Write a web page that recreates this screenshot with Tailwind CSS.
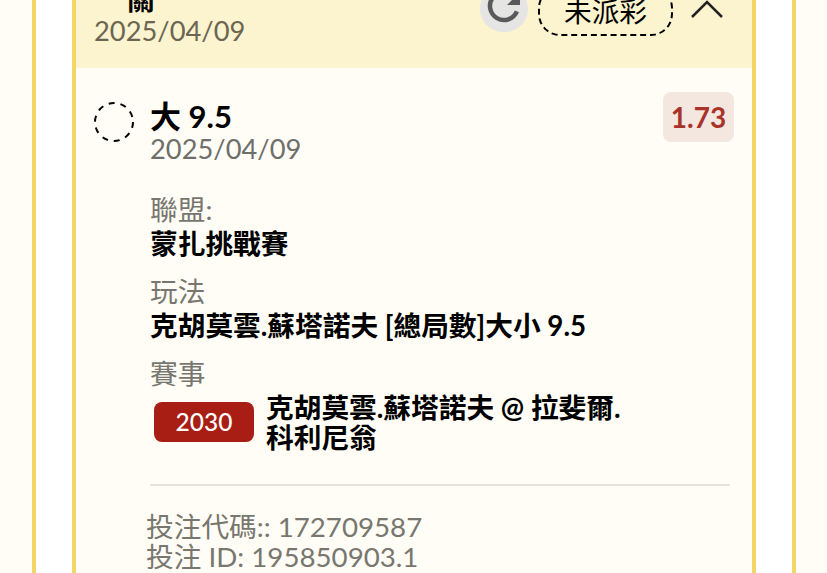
<!DOCTYPE html>
<html lang="en">
<head>
  <meta charset="UTF-8" />
  <title>Bet detail</title>
  <script src="https://cdn.jsdelivr.net/npm/@tailwindcss/browser@4"></script>
</head>
<body class="bg-[#fffdf6] h-[573px] overflow-hidden font-['Lato','Noto_Sans_CJK_TC',sans-serif]">
  <!-- outer card -->
  <div class="mx-8 w-[764px] h-[573px] border-x-4 border-[#f5d565] bg-white px-9 overflow-hidden">
    <div class="h-[573px] border-x-4 border-[#f5d565] bg-[#fffdf6]">
      <!-- header, scrolled off the top -->
      <div class="h-[68px] bg-[#fcf3cf] pl-[18px] pr-7 flex justify-between overflow-hidden">
        <div class="-mt-[15px]">
          <p class="text-[27.7px] leading-[30px] font-bold text-black pl-[33px] h-[30px]">關</p>
          <p class="text-[27.3px] leading-[32px] text-[#6b6552]">2025/04/09</p>
        </div>
        <div class="flex items-start -mt-[14px]">
          <div class="w-12 h-[46px] rounded-full bg-[#e5e5e3] flex items-center justify-center">
            <svg width="36" height="36" viewBox="0 0 36 36" fill="none">
              <path d="M27.9 5.1 A 14 14 0 1 0 30.9 20.4" stroke="#5a5a5c" stroke-width="4.5" />
              <path d="M21 14 L34 14 L34 1 Z" fill="#5a5a5c" />
            </svg>
          </div>
          <div class="w-[135px] h-[50px] ml-[10px] pt-[2px] rounded-[22px] border-2 border-dashed border-black flex items-center justify-center text-[27.7px] text-black">未派彩</div>
          <svg class="ml-[17px] mt-[12px]" width="34" height="22" viewBox="0 0 34 22" fill="none">
            <path d="M2 19 L17 4 L32 19" stroke="#222" stroke-width="2.5" />
          </svg>
        </div>
      </div>
      <!-- body -->
      <div class="pl-[18px] pr-[18px] pt-6">
        <div class="flex">
          <svg class="mt-[10px] shrink-0" width="40" height="40" viewBox="0 0 40 40" fill="none">
            <circle cx="20" cy="20" r="19" stroke="#000" stroke-width="2" stroke-dasharray="6 5.94" />
          </svg>
          <div class="ml-4 flex-1">
            <p class="text-[31px] leading-[34px] mt-[7px] font-bold text-black">大 9.5</p>
            <p class="text-[27.3px] leading-[32px] text-[#6e6e6a]">2025/04/09</p>
          </div>
          <div class="w-[71px] h-[50px] rounded-lg bg-[#f3e7e0] flex items-center justify-center text-[28px] font-bold text-[#a8332b]">1.73</div>
        </div>
        <div class="ml-14 mt-7">
          <p class="text-[27.7px] leading-[33px] text-[#77776f]">聯盟:</p>
          <p class="text-[27.7px] leading-[35px] font-bold text-black">蒙扎挑戰賽</p>
          <p class="text-[27.7px] leading-[35px] mt-[13px] text-[#77776f]">玩法</p>
          <p class="text-[27.7px] leading-[33px] font-bold text-black">克胡莫雲.蘇塔諾夫 [總局數]大小 9.5</p>
          <p class="text-[27.7px] leading-[35px] mt-[14px] text-[#77776f]">賽事</p>
          <div class="flex items-start mt-[2px]">
            <div class="w-[100px] h-10 mt-[9px] ml-1 rounded-lg bg-[#a81e14] flex items-center justify-center text-[24.5px] font-medium text-white shrink-0">2030</div>
            <p class="ml-3 w-[360px] text-[27.7px] leading-[30px] font-bold text-black">克胡莫雲.蘇塔諾夫 @ 拉斐爾.科利尼翁</p>
          </div>
          <div class="mt-[31px] w-[580px] border-t-2 border-[#e5e4dc]"></div>
          <div class="-ml-1 mt-[26px] text-[27.7px] leading-[30px] text-[#77776f]">
            <p>投注代碼:: 172709587</p>
            <p>投注 ID: 195850903.1</p>
          </div>
        </div>
      </div>
    </div>
  </div>
</body>
</html>
